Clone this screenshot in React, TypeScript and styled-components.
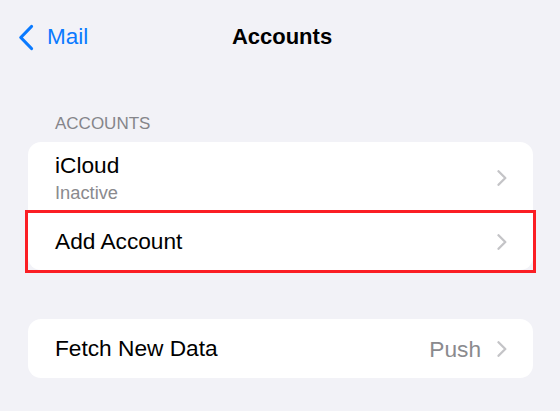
import React from 'react'
import styled, { createGlobalStyle } from 'styled-components'

const GlobalStyle = createGlobalStyle`
  html, body {
    margin: 0;
    padding: 0;
    background: #f2f2f7;
  }
  body {
    font-family: 'Liberation Sans', Arial, sans-serif;
    -webkit-font-smoothing: antialiased;
  }
`

const rows = [
  { label: 'iCloud', sub: 'Inactive', height: 71 },
  { label: 'Add Account', height: 57, highlight: true },
]

const BackChevron = () => (
  <svg width="16" height="27" viewBox="0 0 16 27" fill="none">
    <path
      d="M13.5 2.5 L2.8 13.5 L13.5 24.5"
      stroke="#0a7aff"
      strokeWidth="3.2"
      strokeLinecap="round"
      strokeLinejoin="round"
    />
  </svg>
)

const Chevron = () => (
  <svg width="10" height="16" viewBox="0 0 10 16" fill="none">
    <path
      d="M1.5 1.2 L8.3 8 L1.5 14.8"
      stroke="#c4c4c7"
      strokeWidth="2.3"
      strokeLinecap="round"
      strokeLinejoin="round"
    />
  </svg>
)

const App = () => {
  return (
    <Page>
      <GlobalStyle />
      <NavBar>
        <BackButton>
          <BackChevron />
          <span>Mail</span>
        </BackButton>
        <Title>Accounts</Title>
        <span />
      </NavBar>

      <SectionHeader>Accounts</SectionHeader>
      <Group>
        {rows.map((row) => (
          <Row key={row.label} height={row.height} highlight={row.highlight}>
            <Labels>
              <Label>{row.label}</Label>
              {row.sub && <SubLabel>{row.sub}</SubLabel>}
            </Labels>
            <Accessory>
              <Chevron />
            </Accessory>
          </Row>
        ))}
      </Group>

      <Group spaced>
        <Row height={59}>
          <Labels>
            <Label>Fetch New Data</Label>
          </Labels>
          <Accessory>
            <Value>Push</Value>
            <Chevron />
          </Accessory>
        </Row>
      </Group>
    </Page>
  )
}

export default App

const Page = styled.div`
  min-height: 100vh;
  background: #f2f2f7;
  display: flex;
  flex-direction: column;
`

const NavBar = styled.div`
  display: grid;
  grid-template-columns: 1fr auto 1fr;
  align-items: center;
  height: 74px;
  padding: 0 18px;
`

const BackButton = styled.div`
  display: flex;
  align-items: center;
  gap: 13px;
  color: #0a7aff;
  font-size: 22.5px;
  line-height: 1;
  span {
    padding-top: 1px;
  }
`

const Title = styled.div`
  font-size: 22px;
  font-weight: 700;
  color: #000;
  line-height: 1;
  padding-left: 4px;
`

const SectionHeader = styled.div`
  margin-top: 40px;
  padding-left: 55px;
  font-size: 17px;
  line-height: 20px;
  color: #85858a;
  text-transform: uppercase;
  margin-bottom: 8px;
`

const Group = styled.div<{ spaced?: boolean }>`
  margin: ${(p) => (p.spaced ? '49px' : '0')} 27px 0 28px;
  background: #fff;
  border-radius: 13px;
`

const Row = styled.div<{ height: number; highlight?: boolean }>`
  display: flex;
  align-items: center;
  justify-content: space-between;
  height: ${(p) => p.height}px;
  padding: 0 26px 0 27px;
  box-sizing: border-box;
  ${(p) =>
    p.highlight &&
    `
    outline: 3px solid #fb1e24;
  `}
`

const Labels = styled.div`
  display: flex;
  flex-direction: column;
`

const Label = styled.div`
  font-size: 22.7px;
  line-height: 27px;
  color: #000;
`

const SubLabel = styled.div`
  font-size: 18.3px;
  line-height: 22px;
  color: #8a8a8e;
  margin-top: 3px;
`

const Accessory = styled.div`
  display: flex;
  align-items: center;
  gap: 16px;
`

const Value = styled.span`
  font-size: 22.7px;
  color: #8a8a8e;
  padding-top: 1px;
`
